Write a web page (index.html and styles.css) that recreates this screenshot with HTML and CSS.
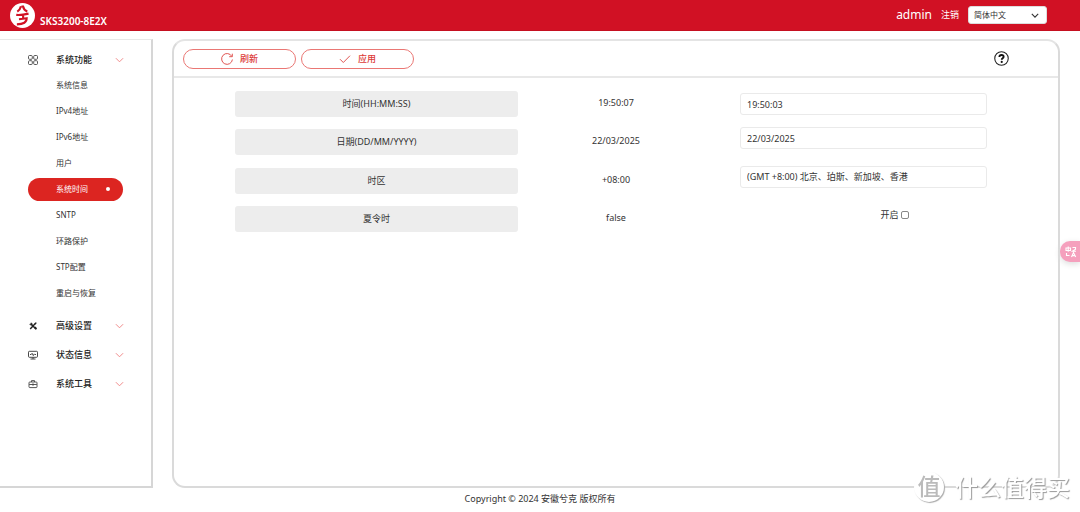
FILE: index.html
```html
<!DOCTYPE html>
<html lang="zh-CN">
<head>
<meta charset="utf-8">
<title>SKS3200-8E2X</title>
<link rel="stylesheet" href="styles.css">
</head>
<body>
<svg class="defs" aria-hidden="true">
  <symbol id="chevron" viewBox="0 0 10 6"><path d="M1 1l4 4 4-4"/></symbol>
</svg>
<header class="topbar">
  <div class="brand">
    <svg class="logo" viewBox="0 0 24 24"><circle cx="12" cy="12" r="12" fill="#fff"/><path d="M10.500 3.200Q9.800 6.500 7 8.300M11 3.400h1.600q.6 3.400 4 4.800M6 11.400q5 .4 11.800-1.200M12.600 11v4.200M8.600 15.600q3.800-.4 7.400-.9q.2 5.600-9.400 5.800" fill="none" stroke="#d11124" stroke-width="2"/></svg>
    <span class="model">SKS3200-8E2X</span>
  </div>
  <div class="account">
    <span class="user">admin</span>
    <a class="logout" href="#">注销</a>
    <span class="lang">
      <select class="lang-select" aria-label="语言"><option>简体中文</option></select>
      <svg class="lang-arrow" viewBox="0 0 10 6"><path d="M1 1l4 4 4-4"/></svg>
    </span>
  </div>
</header>
<div class="body">
  <nav class="sidebar">
    <button class="group" type="button">
      <svg class="icon" viewBox="0 0 10 10"><g fill="none" stroke="#444" stroke-width=".9"><rect x=".5" y=".5" width="3.800" height="3.800" rx="1"/><rect x="5.700" y=".5" width="3.800" height="3.800" rx="1"/><rect x=".5" y="5.700" width="3.800" height="3.800" rx="1"/><rect x="5.700" y="5.700" width="3.800" height="3.800" rx="1"/></g></svg>
      <span>系统功能</span><svg class="chevron"><use href="#chevron"/></svg>
    </button>
    <ul class="menu">
      <li><a class="item" href="#">系统信息</a></li>
      <li><a class="item" href="#">IPv4地址</a></li>
      <li><a class="item" href="#">IPv6地址</a></li>
      <li><a class="item" href="#">用户</a></li>
      <li><a class="item active" href="#">系统时间</a></li>
      <li><a class="item" href="#">SNTP</a></li>
      <li><a class="item" href="#">环路保护</a></li>
      <li><a class="item" href="#">STP配置</a></li>
      <li><a class="item" href="#">重启与恢复</a></li>
    </ul>
    <button class="group" type="button">
      <svg class="icon" viewBox="0 0 10 10"><path d="M2.500 2.500l5 5" stroke="#222" stroke-width="1.500"/><path d="M7.800 2L2.200 7.900" stroke="#222" stroke-width="1.400"/><path d="M1.400 2.700c.1 1.300 1.100 1.900 2.300 1.600l.8-.9c.1-1.200-.6-2-1.900-2l.8 1.100-.9.900zM6.200 6.400l1.100-1 1.600 1.700c.3 1-.7 1.900-1.700 1.500zM7 1.800l1.300-.4.3.4-.5 1.300-1 .4-.5-.6z" fill="#222"/></svg>
      <span>高级设置</span><svg class="chevron"><use href="#chevron"/></svg>
    </button>
    <button class="group" type="button">
      <svg class="icon" viewBox="0 0 10 10"><path d="M1.400 1.300h7.200q.9 0 .9.900v4.200q0 .9-.9.900H1.400q-.9 0-.9-.9V2.200q0-.9.9-.9zM2.500 9h5M5 7.300V9M2 4.500h1.200l.9-1.200 1.200 2.300 1-1.700.6.600H8" fill="none" stroke="#333" stroke-width=".9"/></svg>
      <span>状态信息</span><svg class="chevron"><use href="#chevron"/></svg>
    </button>
    <button class="group" type="button">
      <svg class="icon" viewBox="0 0 10 10"><path d="M1.800 3h6.400q.8 0 .8.800v4q0 .8-.8.800H1.800q-.8 0-.8-.8v-4q0-.8.800-.8zM3.500 3V1.600h3V3M1.200 5.500h7.600M5 4.300v2.500" fill="none" stroke="#444" stroke-width=".9"/></svg>
      <span>系统工具</span><svg class="chevron"><use href="#chevron"/></svg>
    </button>
  </nav>
  <main class="panel">
    <div class="toolbar">
      <button class="action" type="button"><svg class="action-icon" viewBox="0 0 12 12"><path d="M10.800 3.400A5.400 5.400 0 1 0 11.400 6.500M11.300.7v3H8.200"/></svg>刷新</button>
      <button class="action" type="button"><svg class="action-icon" viewBox="0 0 12 12"><path d="M1 6.200l3.300 3.300L11 2.700"/></svg>应用</button>
      <button class="help" type="button" aria-label="帮助"><svg class="help-icon" viewBox="0 0 14 14"><circle cx="7" cy="7" r="6.300" fill="none" stroke="#222" stroke-width="1"/><path d="M5 5.600C5 4.300 5.800 3.700 7 3.700s2 .7 2 1.700c0 1.400-1.800 1.400-1.800 2.800" fill="none" stroke="#111" stroke-width="1.700"/><circle cx="7.200" cy="10.200" r="1" fill="#111"/></svg></button>
    </div>
    <form class="settings">
      <div class="row first">
        <label class="name" for="time">时间(HH:MM:SS)</label>
        <span class="value">19:50:07</span>
        <input class="field" id="time" type="text" value="19:50:03">
      </div>
      <div class="row">
        <label class="name" for="date">日期(DD/MM/YYYY)</label>
        <span class="value">22/03/2025</span>
        <input class="field" id="date" type="text" value="22/03/2025">
      </div>
      <div class="row">
        <label class="name" for="zone">时区</label>
        <span class="value">+08:00</span>
        <select class="field" id="zone"><option>(GMT +8:00) 北京、珀斯、新加坡、香港</option></select>
      </div>
      <div class="row">
        <span class="name">夏令时</span>
        <span class="value">false</span>
        <label class="enable">开启<input class="check" type="checkbox"></label>
      </div>
    </form>
  </main>
</div>
<footer class="footer">Copyright © 2024 安徽兮克 版权所有</footer>
<button class="translate" type="button" aria-label="翻译"><svg class="translate-icon" viewBox="0 0 12 12"><g fill="none" stroke="#fff" stroke-width="1.100"><path d="M1 2h4.500v2.500H1zM3.200.6v5.200M7.500 1.500h3v1.700L7.500 5.200h3.500M1.500 7v2.500h3M6.500 11l2-4.500 2.200 4.500M7 9.600h3"/></g></svg></button>
<div class="watermark"><span class="seal">值</span><span>什么值得买</span></div>
</body>
</html>
```

FILE: styles.css
```css
* { box-sizing: border-box; }
body {
  margin: 0;
  min-height: 100vh;
  display: flex;
  flex-direction: column;
  background: #fff;
  color: #333;
  font: 9px/14px "Noto Sans", "Noto Sans CJK SC", sans-serif;
}
button, input, select { font: inherit; color: inherit; margin: 0; }
button { cursor: pointer; }
a { color: inherit; text-decoration: none; }
.defs { position: absolute; width: 0; height: 0; }

.topbar {
  height: 31px;
  flex: none;
  display: flex;
  justify-content: space-between;
  align-items: center;
  padding: 0 33px 0 10px;
  background: #d11124;
  border-bottom: 1px solid #c50f20;
  color: #fff;
}
.brand { display: flex; align-items: center; gap: 5px; }
.logo { width: 25px; height: 25px; }
.model { font-size: 10px; font-weight: 600; padding-top: 11px; }
.account { display: flex; align-items: center; gap: 9px; }
.user { font-size: 12px; }
.lang { position: relative; display: flex; }
.lang-select {
  appearance: none;
  width: 79px;
  height: 18px;
  padding: 0 5px;
  border: 1px solid #ddd;
  border-radius: 3px;
  background: #fff;
  color: #333;
  font-size: 8px;
}
.lang-arrow {
  position: absolute;
  right: 8px;
  top: 7px;
  width: 8px;
  height: 5px;
  fill: none;
  stroke: #333;
  stroke-width: 1.4;
  pointer-events: none;
}

.body { flex: 1; display: flex; gap: 19px; padding: 8px 20px 0 0; }
.sidebar {
  width: 153px;
  flex: none;
  padding-top: 5px;
  border: solid #d6d6d6;
  border-width: 1px 2px 2px 0;
  border-top-color: #e8e8e8;
}
.group {
  width: 100%;
  height: 29px;
  display: grid;
  grid-template-columns: 28px 59px 9px;
  align-items: center;
  padding: 0 0 0 28px;
  border: 0;
  background: none;
  text-align: left;
  font-weight: 500;
  color: #222;
}
.icon { width: 10px; height: 10px; }
.chevron { width: 9px; height: 6px; fill: none; stroke: #ee7f7f; }
.menu { list-style: none; margin: -2px 0 5px; padding: 0; }
.menu li { height: 26px; display: flex; align-items: center; padding: 0 28px; }
.item {
  flex: 1;
  height: 23px;
  display: flex;
  align-items: center;
  justify-content: space-between;
  padding: 0 13px 0 28px;
  border-radius: 12px;
  font-size: 8px;
}
.active { background: #dc2521; color: #fff; }
.active::after { content: ""; width: 4px; height: 4px; border-radius: 50%; background: #fff; }

.panel { flex: 1; border: 2px solid #dadada; border-top-color: #e4e4e4; border-radius: 13px; }
.toolbar {
  display: flex;
  align-items: center;
  gap: 5px;
  height: 37px;
  padding: 0 49px 0 9px;
  border-bottom: 2px solid #e8e8e8;
}
.action {
  width: 113px;
  height: 20px;
  display: flex;
  align-items: center;
  justify-content: center;
  gap: 7px;
  border: 1px solid #ea7774;
  border-radius: 10px;
  background: #fff;
  color: #dc3b38;
  font-weight: 500;
}
.action-icon { width: 12px; height: 12px; fill: none; stroke: #e05552; }
.help { margin-left: auto; display: flex; padding: 0; border: 0; background: none; }
.help-icon { width: 15px; height: 15px; }

.settings { padding: 11px 71px 0 61px; }
.row {
  min-height: 38px;
  display: grid;
  grid-template-columns: 283fr 196fr 26px 247fr;
  align-items: start;
  margin-bottom: 1px;
}
.row:nth-child(odd) { margin-bottom: 0; }
.name {
  margin-top: 2px;
  padding: 6px 0;
  border-radius: 3px;
  background: #ededed;
  text-align: center;
}
.value { padding-top: 7px; text-align: center; }
.field {
  grid-column: 4;
  appearance: none;
  width: 100%;
  height: 22px;
  padding: 0 6px;
  border: 1px solid #eaeaea;
  border-radius: 3px;
  background: #fff;
}
.first .field { margin-top: 4px; }
.enable { grid-column: 4; display: flex; align-items: center; justify-content: center; gap: 2px; padding: 4px 0 0 62px; }
.check { appearance: none; width: 8px; height: 8px; border: 1px solid #888; border-radius: 2px; }
.check:checked { background: #dc2521; }

.footer { flex: none; padding: 4px 0 6px; text-align: center; }

.translate {
  position: fixed;
  right: 0;
  top: 241px;
  width: 20px;
  height: 21px;
  padding: 0 0 0 5px;
  display: flex;
  align-items: center;
  border: 0;
  border-radius: 10px 0 0 10px;
  background: #f5a0bd;
  box-shadow: 0 2px 6px #ddd;
}
.translate-icon { width: 12px; height: 12px; }
.watermark {
  position: fixed;
  right: 10px;
  bottom: 10px;
  display: flex;
  align-items: center;
  gap: 11px;
  color: #fff;
  font-size: 23px;
  font-weight: 500;
  line-height: 30px;
  text-shadow: 1px 1px 1px #999;
  pointer-events: none;
}
.seal {
  width: 30px;
  height: 30px;
  border-radius: 50%;
  background: #fff;
  box-shadow: 1px 1px 1px #aaa;
  color: #bbb;
  text-align: center;
  text-shadow: none;
  line-height: 28px;
}
```
